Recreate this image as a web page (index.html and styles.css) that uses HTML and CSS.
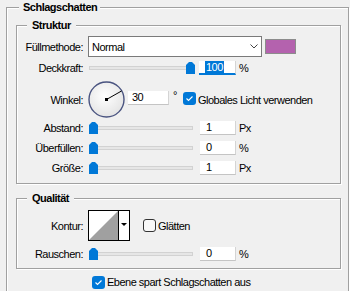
FILE: index.html
```html
<!DOCTYPE html>
<html lang="de">
<head>
  <meta charset="UTF-8" />
  <title>Ebenenstil - Schlagschatten</title>
  <link rel="stylesheet" href="styles.css">
</head>
<body>
  <fieldset class="group outer">
    <legend>Schlagschatten</legend>

    <fieldset class="group inner">
      <legend>Struktur</legend>

      <div class="row row-blend">
        <span class="lbl">Füllmethode:</span>
        <div class="select">
          <span>Normal</span>
          <svg width="8" height="5" viewBox="0 0 8 5"><polyline points="0.5,0.5 4,4 7.5,0.5" fill="none" stroke="#444" stroke-width="1"/></svg>
        </div>
        <span class="swatch"></span>
      </div>

      <div class="row row-opacity">
        <span class="lbl">Deckkraft:</span>
        <div class="slider">
          <span class="track"></span>
          <svg class="thumb" style="left:98px" width="9" height="12" viewBox="0 0 9 12"><path d="M3 0H6L9 3V12H0V3Z" fill="#0078d7"/></svg>
        </div>
        <span class="field focus"><span class="sel">100</span></span>
        <span class="unit">%</span>
      </div>

      <div class="row row-angle">
        <span class="lbl">Winkel:</span>
        <svg class="dial" width="37" height="37" viewBox="0 0 37 37">
          <defs>
            <radialGradient id="dialFill" cx="45%" cy="40%" r="65%">
              <stop offset="0" stop-color="#ffffff"/>
              <stop offset="1" stop-color="#e2e2e2"/>
            </radialGradient>
          </defs>
          <circle cx="18.5" cy="18.5" r="17.5" fill="url(#dialFill)" stroke="#4a5480" stroke-width="1.4"/>
          <line x1="18.5" y1="18.5" x2="33.5" y2="10" stroke="#000" stroke-width="1"/>
          <rect x="17" y="17" width="3" height="3" fill="#000"/>
        </svg>
        <span class="field angle">30</span>
        <span class="deg">°</span>
        <span class="check on"><svg width="13" height="13" viewBox="0 0 13 13"><polyline points="3.5,6.5 5.5,8.5 9.5,4.5" fill="none" stroke="#fff" stroke-width="1.1"/></svg></span>
        <span class="check-text">Globales Licht verwenden</span>
      </div>

      <div class="row">
        <span class="lbl">Abstand:</span>
        <div class="slider">
          <span class="track"></span>
          <svg class="thumb" style="left:1px" width="9" height="12" viewBox="0 0 9 12"><path d="M3 0H6L9 3V12H0V3Z" fill="#0078d7"/></svg>
        </div>
        <span class="field">1</span>
        <span class="unit">Px</span>
      </div>

      <div class="row">
        <span class="lbl">Überfüllen:</span>
        <div class="slider">
          <span class="track"></span>
          <svg class="thumb" style="left:1px" width="9" height="12" viewBox="0 0 9 12"><path d="M3 0H6L9 3V12H0V3Z" fill="#0078d7"/></svg>
        </div>
        <span class="field">0</span>
        <span class="unit">%</span>
      </div>

      <div class="row">
        <span class="lbl">Größe:</span>
        <div class="slider">
          <span class="track"></span>
          <svg class="thumb" style="left:1px" width="9" height="12" viewBox="0 0 9 12"><path d="M3 0H6L9 3V12H0V3Z" fill="#0078d7"/></svg>
        </div>
        <span class="field">1</span>
        <span class="unit">Px</span>
      </div>
    </fieldset>

    <fieldset class="group inner quality">
      <legend>Qualität</legend>

      <div class="row row-contour">
        <span class="lbl">Kontur:</span>
        <div class="contour">
          <svg width="29" height="29" viewBox="0 0 29 29"><polygon points="0,29 29,0 29,29" fill="#a0a0a0"/></svg>
          <span class="drop"><span class="caret"></span></span>
        </div>
        <span class="check off"></span>
        <span class="check-text">Glätten</span>
      </div>

      <div class="row">
        <span class="lbl">Rauschen:</span>
        <div class="slider">
          <span class="track"></span>
          <svg class="thumb" style="left:1px" width="9" height="12" viewBox="0 0 9 12"><path d="M3 0H6L9 3V12H0V3Z" fill="#0078d7"/></svg>
        </div>
        <span class="field">0</span>
        <span class="unit">%</span>
      </div>
    </fieldset>

    <div class="row knockout">
      <span class="check on"><svg width="13" height="13" viewBox="0 0 13 13"><polyline points="3.5,6.5 5.5,8.5 9.5,4.5" fill="none" stroke="#fff" stroke-width="1.1"/></svg></span>
      <span class="check-text">Ebene spart Schlagschatten aus</span>
    </div>
  </fieldset>
</body>
</html>
```

FILE: styles.css
```css
* { box-sizing: border-box; }
body {
  margin: 0;
  background: #f0f0f0;
  color: #000;
  font: 11px "Liberation Sans", Arial, sans-serif;
  letter-spacing: -0.5px;
  overflow: hidden;
}

/* etched group boxes */
.group {
  margin: 0;
  min-width: 0;
  border: 1px solid #a0a0a0;
  box-shadow: 1px 1px 0 #fff, inset 1px 1px 0 #fff;
}
.group > legend {
  font-weight: bold;
  line-height: 14px;
  background: #f0f0f0;
}
.outer { margin-left: 6px; width: 343px; padding: 4px 0 20px 9px; }
.outer > legend { margin-left: 3px; padding: 0 3px 0 4px; }
.inner { width: 325px; padding: 4px 0 8px 0; }
.inner > legend { margin-left: 10px; padding: 0 5px; }
.quality { margin-top: 7px; padding: 5px 0 7px 0; }

/* rows */
.row { display: flex; align-items: center; height: 14px; margin-top: 6px; }
.row-blend { height: 21px; margin-top: 0; }
.row-opacity { margin-top: 4px; }
.row-angle { height: 37px; }
.row-angle + .row { margin-top: 3px; }
.row-contour { height: 31px; margin-top: 0; }
.lbl { flex: none; width: 66px; margin-right: 5px; text-align: right; }

.select {
  display: flex; align-items: center; justify-content: space-between;
  width: 174px; height: 21px;
  padding: 0 3px;
  background: #fff;
  border: 1px solid #7a7a7a;
}
.swatch {
  width: 31px; height: 15px; margin-left: 3px;
  background: #b462ae;
  border: 1px solid #8c8c8c;
}

.slider { position: relative; display: flex; align-items: center; width: 108px; height: 14px; flex: none; }
.track { width: 104px; height: 4px; margin-left: 1px; background: #e6e6e6; border: 1px solid #d2d2d2; }
.thumb { position: absolute; top: 1px; }

.field {
  flex: none;
  width: 36px; height: 14px;
  margin-left: 4px; padding-left: 6px;
  line-height: 13px;
  background: #fff;
  border-right: 1px solid #d4d4d4;
  border-bottom: 1px solid #c4c4c4;
}
.field.focus { width: 37px; margin-left: 3px; border-bottom: 2px solid #0078d7; }
.sel { background: #0078d7; color: #fff; padding: 0 1px; }
.unit { margin-left: 3px; }

.dial { flex: none; }
.field.angle { width: 41px; margin-left: 3px; padding-left: 4px; margin-bottom: 4px; }
.deg { margin: 0 6px 10px 4px; }

.check { flex: none; width: 13px; height: 13px; border-radius: 3px; }
.check.on { background: #0078d7; }
.check.off { background: #f8f8f8; border: 1px solid #333; }
.check svg { display: block; }
.check-text { margin-left: 2px; }
.row-angle .check { margin-bottom: 2px; }

.contour {
  display: flex;
  width: 42px; height: 31px;
  background: #fff;
  border: 1px solid #000;
  margin-right: 13px;
}
.contour svg { display: block; }
.drop { display: flex; align-items: center; justify-content: center; flex: 1; border-left: 1px solid #000; }
.caret { border-left: 3px solid transparent; border-right: 3px solid transparent; border-top: 3px solid #000; margin-bottom: 2px; }

.knockout { margin: 6px 0 0 76px; }
```
